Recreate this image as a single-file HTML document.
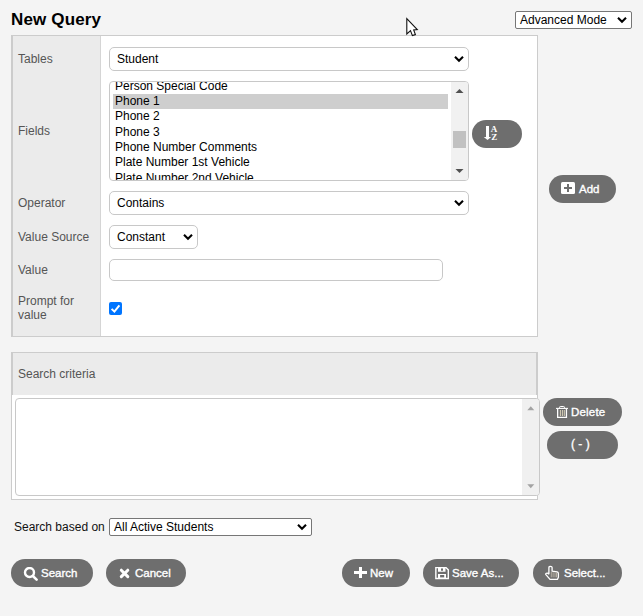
<!DOCTYPE html>
<html><head><meta charset="utf-8">
<style>
*{box-sizing:border-box;margin:0;padding:0}
html,body{width:643px;height:616px;overflow:hidden;background:#f4f4f4;font-family:"Liberation Sans",sans-serif;font-size:12px;color:#222}
div,span,svg{position:absolute}
.t{white-space:nowrap;line-height:14px}
.title{left:11px;top:10px;letter-spacing:0.15px;font-size:17px;font-weight:bold;color:#000;line-height:20px}
.inp{background:#fff;border:1px solid #c8c8c8;border-radius:5px}
.lbl{color:#555;left:18px}
.val{color:#000}
.btn{background:#6e6e6e;border-radius:14px;height:28px;top:559px}
.bt{color:#fff;font-size:11.5px;font-weight:normal;line-height:14px;white-space:nowrap;-webkit-text-stroke:0.35px #fff}
.row{left:0;width:340px;height:15px}
</style></head><body>
<div class="t title">New Query</div>


<!-- Advanced Mode select -->
<div style="left:515px;top:11px;width:117px;height:18px;border:1px solid #767676;border-radius:2px;background:#fff"></div>
<div class="t val" style="left:520px;top:13px;color:#000">Advanced Mode</div>
<svg style="left:617px;top:16px" width="10" height="8" viewBox="0 0 10 8"><path d="M1 1.8 L5 5.8 L9 1.8" fill="none" stroke="#000" stroke-width="2.1"/></svg>

<!-- Main panel -->
<div style="left:11px;top:35px;width:527px;height:302px;background:#fff;border:1px solid #cccccc;border-left-width:2px"></div>
<div style="left:13px;top:36px;width:88px;height:300px;background:#ebebeb;border-right:1px solid #d5d5d5"></div>

<div class="t lbl" style="top:52px">Tables</div>
<div class="t lbl" style="top:124px">Fields</div>
<div class="t lbl" style="top:196px">Operator</div>
<div class="t lbl" style="top:230px">Value Source</div>
<div class="t lbl" style="top:263px">Value</div>
<div class="t lbl" style="top:294px">Prompt for</div>
<div class="t lbl" style="top:308px">value</div>

<!-- Tables select -->
<div class="inp" style="left:109px;top:47px;width:360px;height:24px"></div>
<div class="t val" style="left:117px;top:52px">Student</div>
<svg style="left:454px;top:55px" width="10" height="8" viewBox="0 0 10 8"><path d="M1 1.8 L5 5.8 L9 1.8" fill="none" stroke="#000" stroke-width="2.1"/></svg>

<!-- Fields listbox -->
<div class="inp" style="left:109px;top:81px;width:360px;height:100px;border-radius:4px;overflow:hidden">
  <div style="left:3px;top:12px;width:335px;height:15px;background:#cecece"></div>
  <div class="t val" style="left:5px;top:-3px">Person Special Code</div>
  <div class="t val" style="left:5px;top:12px">Phone 1</div>
  <div class="t val" style="left:5px;top:27px">Phone 2</div>
  <div class="t val" style="left:5px;top:43px">Phone 3</div>
  <div class="t val" style="left:5px;top:58px">Phone Number Comments</div>
  <div class="t val" style="left:5px;top:73px">Plate Number 1st Vehicle</div>
  <div class="t val" style="left:5px;top:89px">Plate Number 2nd Vehicle</div>
  <div style="left:341px;top:0;width:17px;height:98px;background:#f1f1f1"></div>
  <svg style="left:345px;top:6px" width="9" height="6" viewBox="0 0 9 6"><path d="M0.5 5 L4.5 1 L8.5 5 Z" fill="#505050"/></svg>
  <svg style="left:345px;top:86px" width="9" height="6" viewBox="0 0 9 6"><path d="M0.5 1 L4.5 5 L8.5 1 Z" fill="#505050"/></svg>
  <div style="left:343px;top:49px;width:13px;height:17px;background:#c1c1c1"></div>
</div>

<!-- Sort button -->
<div class="btn" style="left:472px;top:120px;width:50px"></div>
<svg style="left:483px;top:125px" width="16" height="16" viewBox="0 0 16 16"><rect x="3" y="1" width="3" height="11.5" fill="#fff"/><path d="M0.8 12 L8.2 12 L4.5 15 Z" fill="#fff"/><text x="7.8" y="7" font-family="Liberation Serif" font-weight="bold" font-size="9" fill="#fff">A</text><text x="8.3" y="15" font-family="Liberation Serif" font-weight="bold" font-size="9" fill="#fff">Z</text></svg>

<!-- Operator select -->
<div class="inp" style="left:109px;top:191px;width:360px;height:24px"></div>
<div class="t val" style="left:117px;top:196px">Contains</div>
<svg style="left:454px;top:199px" width="10" height="8" viewBox="0 0 10 8"><path d="M1 1.8 L5 5.8 L9 1.8" fill="none" stroke="#000" stroke-width="2.1"/></svg>

<!-- Value Source select -->
<div class="inp" style="left:109px;top:225px;width:89px;height:24px"></div>
<div class="t val" style="left:117px;top:230px">Constant</div>
<svg style="left:183px;top:233px" width="10" height="8" viewBox="0 0 10 8"><path d="M1 1.8 L5 5.8 L9 1.8" fill="none" stroke="#000" stroke-width="2.1"/></svg>

<!-- Value input -->
<div class="inp" style="left:109px;top:259px;width:334px;height:22px;border-radius:5px"></div>

<!-- checkbox -->
<div style="left:109px;top:302px;width:13px;height:13px;background:#0075ff;border-radius:2px"></div>
<svg style="left:109px;top:302px" width="13" height="13" viewBox="0 0 13 13"><path d="M2.6 6.9 L5.4 9.6 L10.4 3.4" fill="none" stroke="#fff" stroke-width="2"/></svg>

<!-- Add button -->
<div class="btn" style="left:549px;top:175px;width:67px"></div>
<div style="left:561px;top:182px;width:14px;height:12px;background:#fff;border-radius:1.5px"></div>
<div style="left:567px;top:184px;width:2px;height:8px;background:#6e6e6e"></div>
<div style="left:564px;top:187px;width:8px;height:2px;background:#6e6e6e"></div>
<div class="bt" style="left:579px;top:182px">Add</div>

<!-- Search criteria -->
<div style="left:11px;top:352px;width:527px;height:148px;background:#fff;border:1px solid #cccccc"></div>
<div style="left:11px;top:352px;width:527px;height:43px;background:#ebebeb;border:1px solid #cccccc;border-width:1px 2px 0 2px"></div>
<div class="t lbl" style="top:367px">Search criteria</div>
<div class="inp" style="left:15px;top:398px;width:525px;height:98px;border-radius:4px;overflow:hidden">
  <div style="left:506px;top:0;width:17px;height:96px;background:#f0f0f0"></div>
  <svg style="left:511px;top:7px" width="8" height="5" viewBox="0 0 8 5"><path d="M0.3 4.3 L3.8 0.3 L7.3 4.3 Z" fill="#a3a3a3"/></svg>
  <svg style="left:511px;top:85px" width="8" height="5" viewBox="0 0 8 5"><path d="M0.3 0.3 L3.8 4.3 L7.3 0.3 Z" fill="#a3a3a3"/></svg>
</div>

<!-- Delete / (-) -->
<div class="btn" style="left:543px;top:398px;width:79px"></div>
<svg style="left:556px;top:406px" width="12" height="12" viewBox="0 0 12 12"><path d="M0 2.4 H12" stroke="#fff" stroke-width="1.1"/><path d="M3.6 2.2 V1.2 Q3.6 0.5 4.3 0.5 H7.7 Q8.4 0.5 8.4 1.2 V2.2" stroke="#fff" stroke-width="1" fill="none"/><path d="M1.65 2.8 V11.35 H10.45 V2.8" stroke="#fff" stroke-width="1.3" fill="none"/><path d="M4.4 4 V10 M6.4 4 V10 M8.3 4 V10" stroke="#d8d0b8" stroke-width="1"/></svg>
<div class="bt" style="left:571px;top:405px;letter-spacing:0.2px">Delete</div>
<div class="btn" style="left:547px;top:431px;width:71px"></div>
<div class="bt" style="left:571px;top:437px;font-size:12px">( - )</div>

<!-- Search based on -->
<div class="t" style="left:14px;top:520px;color:#111">Search based on</div>
<div style="left:109px;top:518px;width:203px;height:18px;border:1px solid #767676;border-radius:2px;background:#fff"></div>
<div class="t val" style="left:114px;top:520px">All Active Students</div>
<svg style="left:297px;top:523px" width="10" height="8" viewBox="0 0 10 8"><path d="M1 1.8 L5 5.8 L9 1.8" fill="none" stroke="#000" stroke-width="2.1"/></svg>

<!-- bottom buttons -->
<div class="btn" style="left:11px;width:82px"></div>
<svg style="left:23px;top:567px" width="15" height="14" viewBox="0 0 15 14"><circle cx="6.5" cy="5.5" r="4.5" fill="none" stroke="#fff" stroke-width="2.4"/><path d="M9.6 8.8 L13.6 12.6" stroke="#fff" stroke-width="2.6" stroke-linecap="round"/></svg>
<div class="bt" style="left:41px;top:566px">Search</div>

<div class="btn" style="left:106px;width:80px"></div>
<svg style="left:119px;top:568px" width="12" height="11" viewBox="0 0 12 11"><path d="M2.3 2.2 L8.8 8.6 M8.8 2.2 L2.3 8.6" stroke="#fff" stroke-width="3" stroke-linecap="round"/></svg>
<div class="bt" style="left:135px;top:566px">Cancel</div>

<div class="btn" style="left:342px;width:68px"></div>
<svg style="left:354px;top:567px" width="13" height="11" viewBox="0 0 13 11"><rect x="5" y="0" width="3" height="11" fill="#fff"/><rect x="0" y="4" width="13" height="3" fill="#fff"/></svg>
<div class="bt" style="left:370px;top:566px">New</div>

<div class="btn" style="left:423px;width:96px"></div>
<svg style="left:435px;top:567px" width="15" height="13" viewBox="0 0 15 13"><path d="M0.85 0.6 H11 L13.3 2.9 V11.5 H0.85 Z" fill="none" stroke="#fff" stroke-width="1.4"/><path d="M3 0.5 H10.5 V4.8 H3 Z M6 1.2 V3.8 H8 V1.2 Z" fill="#fff" fill-rule="evenodd"/><path d="M3 7 H11 V11.5 H3 Z M5.1 8.1 V10.4 H9.2 V8.1 Z" fill="#fff" fill-rule="evenodd"/></svg>
<div class="bt" style="left:452px;top:566px">Save As...</div>

<div class="btn" style="left:533px;width:89px"></div>
<svg style="left:544px;top:565px" width="16" height="16" viewBox="0 0 16 16"><path d="M4.9 9.3 V2.6 Q4.9 1.3 6.5 1.3 Q8.1 1.3 8.1 2.6 V6.2 L13.2 6.9 Q14.4 7.2 14.4 8.8 V12.2 L13.4 14.4 H6 L1.9 9.6 Q1.3 8.8 2.3 8.3 Q3.6 7.7 4.9 9.3" fill="none" stroke="#fff" stroke-width="1.3" stroke-linejoin="round"/><path d="M7.3 7 V12.3 M9.1 7.2 V12.3 M11 7.4 V12.3 M12.5 7.6 V12.3" stroke="#c9c0b0" stroke-width="0.8"/></svg>
<div class="bt" style="left:564px;top:566px">Select...</div>

<!-- cursor -->
<svg style="left:405px;top:17px" width="15" height="22" viewBox="0 0 15 22"><path d="M1.8 1.6 L1.8 17 L5.5 13.6 L7.4 18.6 L10.4 17.6 L8.7 13 L12.3 12.6 Z" fill="#fff" stroke="#111" stroke-width="1.1" stroke-linejoin="miter"/></svg>
</body></html>
